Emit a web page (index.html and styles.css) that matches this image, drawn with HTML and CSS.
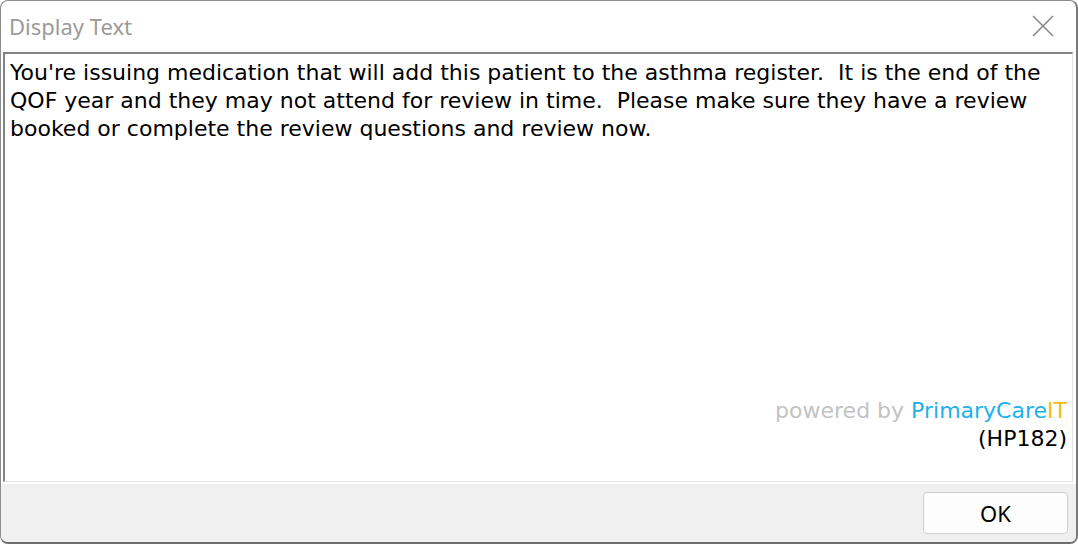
FILE: index.html
```html
<!DOCTYPE html>
<html lang="en">
<head>
  <meta charset="UTF-8">
  <title>Display Text</title>
  <link rel="stylesheet" href="styles.css">
</head>
<body>

  <div class="window">
    <div class="titlebar">
      <span class="title">Display Text</span>
      <button class="close" aria-label="Close">
        <svg width="22" height="22" viewBox="0 0 22 22">
          <path d="M1 1 L21 21 M21 1 L1 21" stroke="#8a8a8a" stroke-width="1.6" fill="none"/>
        </svg>
      </button>
    </div>

    <div class="content">
      <p class="message">You're issuing medication that will add this patient to the asthma register.  It is the end of the<br>QOF year and they may not attend for review in time.  Please make sure they have a review<br>booked or complete the review questions and review now.</p>

      <div class="credit">
        <p>powered by <span class="brand">PrimaryCare</span><span class="brand-it">IT</span></p>
        <p class="code">(HP182)</p>
      </div>
    </div>

    <div class="actions">
      <button class="ok">OK</button>
    </div>
  </div>

</body>
</html>
```

FILE: styles.css
```css
body {
  margin: 0;
  background-color: #fff;
}
.window {
  width: 1078px;
  height: 544px;
  box-sizing: border-box;
  border: 1px solid #8c8c8c;
  border-right: 2px solid #7a7a7a;
  border-bottom: 2px solid #6e6e6e;
  border-radius: 8px;
  background-color: #fff;
  display: flex;
  flex-direction: column;
  overflow: hidden;
}
.titlebar {
  height: 51px;
  flex: none;
  display: flex;
  align-items: center;
  justify-content: space-between;
  padding: 0 0 0 8px;
}
.title {
  font-family: "Noto Sans", sans-serif;
  font-size: 22px;
  color: #9a9a9a;
  margin-top: -1px;
}
.close {
  border: none;
  background: none;
  padding: 0;
  width: 66px;
  height: 51px;
  display: flex;
  align-items: center;
  justify-content: center;
}
.close svg {
  margin-top: -2px;
}
.content {
  flex: 1;
  margin: 0 3px 0 2px;
  border-top: 2px solid #828282;
  border-left: 2px solid #828282;
  border-right: 1px solid #e3e3e3;
  border-bottom: 1px solid #e3e3e3;
  padding: 5px 5px 28px 5px;
  display: flex;
  flex-direction: column;
  justify-content: space-between;
  font-family: "DejaVu Sans", sans-serif;
  font-size: 22px;
  line-height: 28px;
  color: #000;
}
.message {
  margin: 0;
  white-space: pre;
}
.credit {
  text-align: right;
}
.credit p {
  margin: 0;
  color: #c3c3c3;
}
.credit .code {
  color: #000;
}
.brand {
  color: #1eb0ee;
}
.brand-it {
  color: #f6b818;
}
.actions {
  height: 58px;
  flex: none;
  box-sizing: border-box;
  margin-top: 2px;
  background-color: #f0f0f0;
  display: flex;
  justify-content: flex-end;
  align-items: flex-start;
  padding: 8px 8px 0 0;
}
.ok {
  width: 145px;
  height: 42px;
  border: 1px solid #cfcfcf;
  border-radius: 4px;
  background-color: #fdfdfd;
  font-family: "Noto Sans", sans-serif;
  font-size: 22px;
  color: #000;
  padding: 0;
}
```
